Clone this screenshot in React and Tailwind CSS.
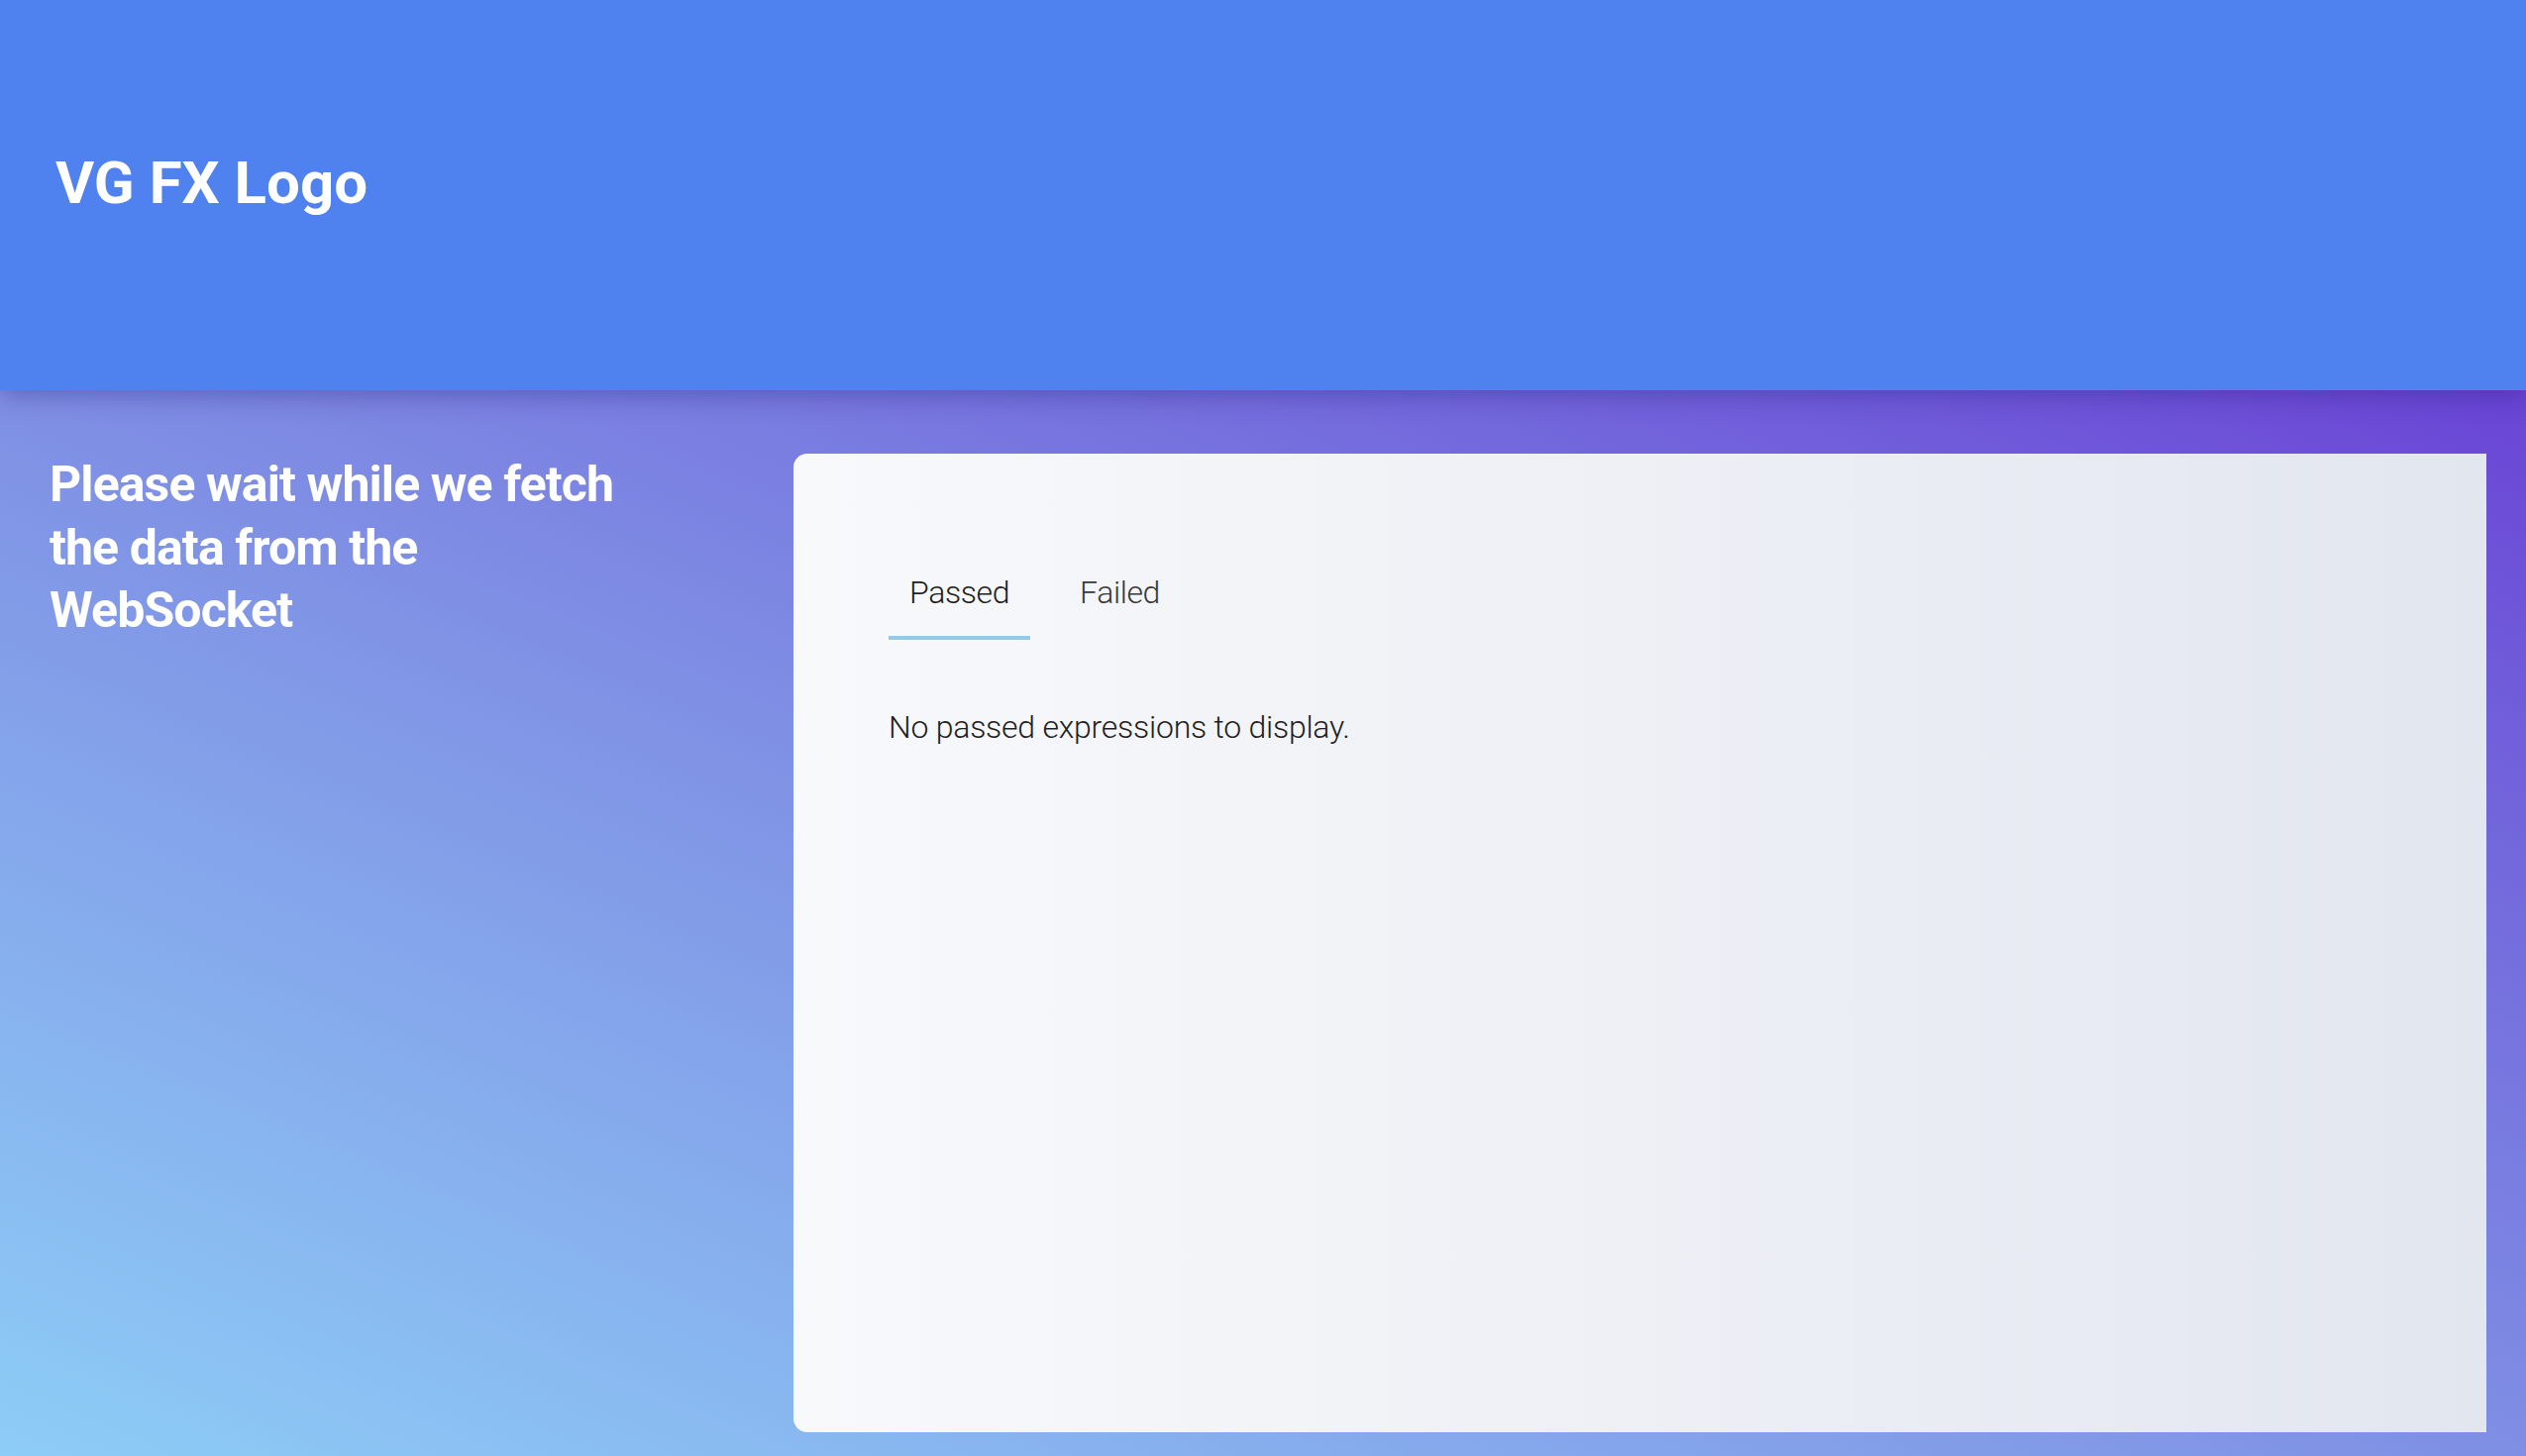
import { useState } from "react";

const TABS = ["Passed", "Failed"];

export default function App() {
  const [active, setActive] = useState("Passed");

  return (
    <div className="min-h-screen flex flex-col font-['Roboto',_'Liberation_Sans',_sans-serif]">
      <header className="relative z-10 h-[394px] shrink-0 bg-[#4f82ee] pl-[56px] pt-[150px] shadow-[0_6px_24px_rgba(40,30,120,0.35)]">
        <h1 className="text-[60px] leading-[70px] font-bold text-white">VG FX Logo</h1>
      </header>

      <main className="flex-1 flex bg-gradient-to-tr from-[#8dcdf6] via-[#7f8fe4] to-[#6a44d5] pt-16 pb-6 pl-[50px] pr-10">
        <div className="w-[751px] shrink-0">
          <h2 className="max-w-[620px] text-[50px] leading-[63.5px] font-bold tracking-[-0.9px] text-white">
            Please wait while we fetch the data from the WebSocket
          </h2>
        </div>

        <section className="flex-1 rounded-l-[14px] bg-gradient-to-r from-[#f8f9fb] to-[#e2e6ef] p-24">
          <div className="flex gap-[29px]">
            {TABS.map((tab) => (
              <button
                key={tab}
                onClick={() => setActive(tab)}
                className={`px-[21px] py-5 text-[32px] leading-[48px] font-light tracking-[-0.4px] border-b-4 ${
                  active === tab ? "border-[#92cbe6] text-[#1f1f1f]" : "border-transparent text-[#3a3a3a]"
                }`}
              >
                {tab}
              </button>
            ))}
          </div>
          <p className="mt-16 text-[32px] leading-[48px] font-light tracking-[-0.25px] text-[#1f1f1f]">
            No {active.toLowerCase()} expressions to display.
          </p>
        </section>
      </main>
    </div>
  );
}
